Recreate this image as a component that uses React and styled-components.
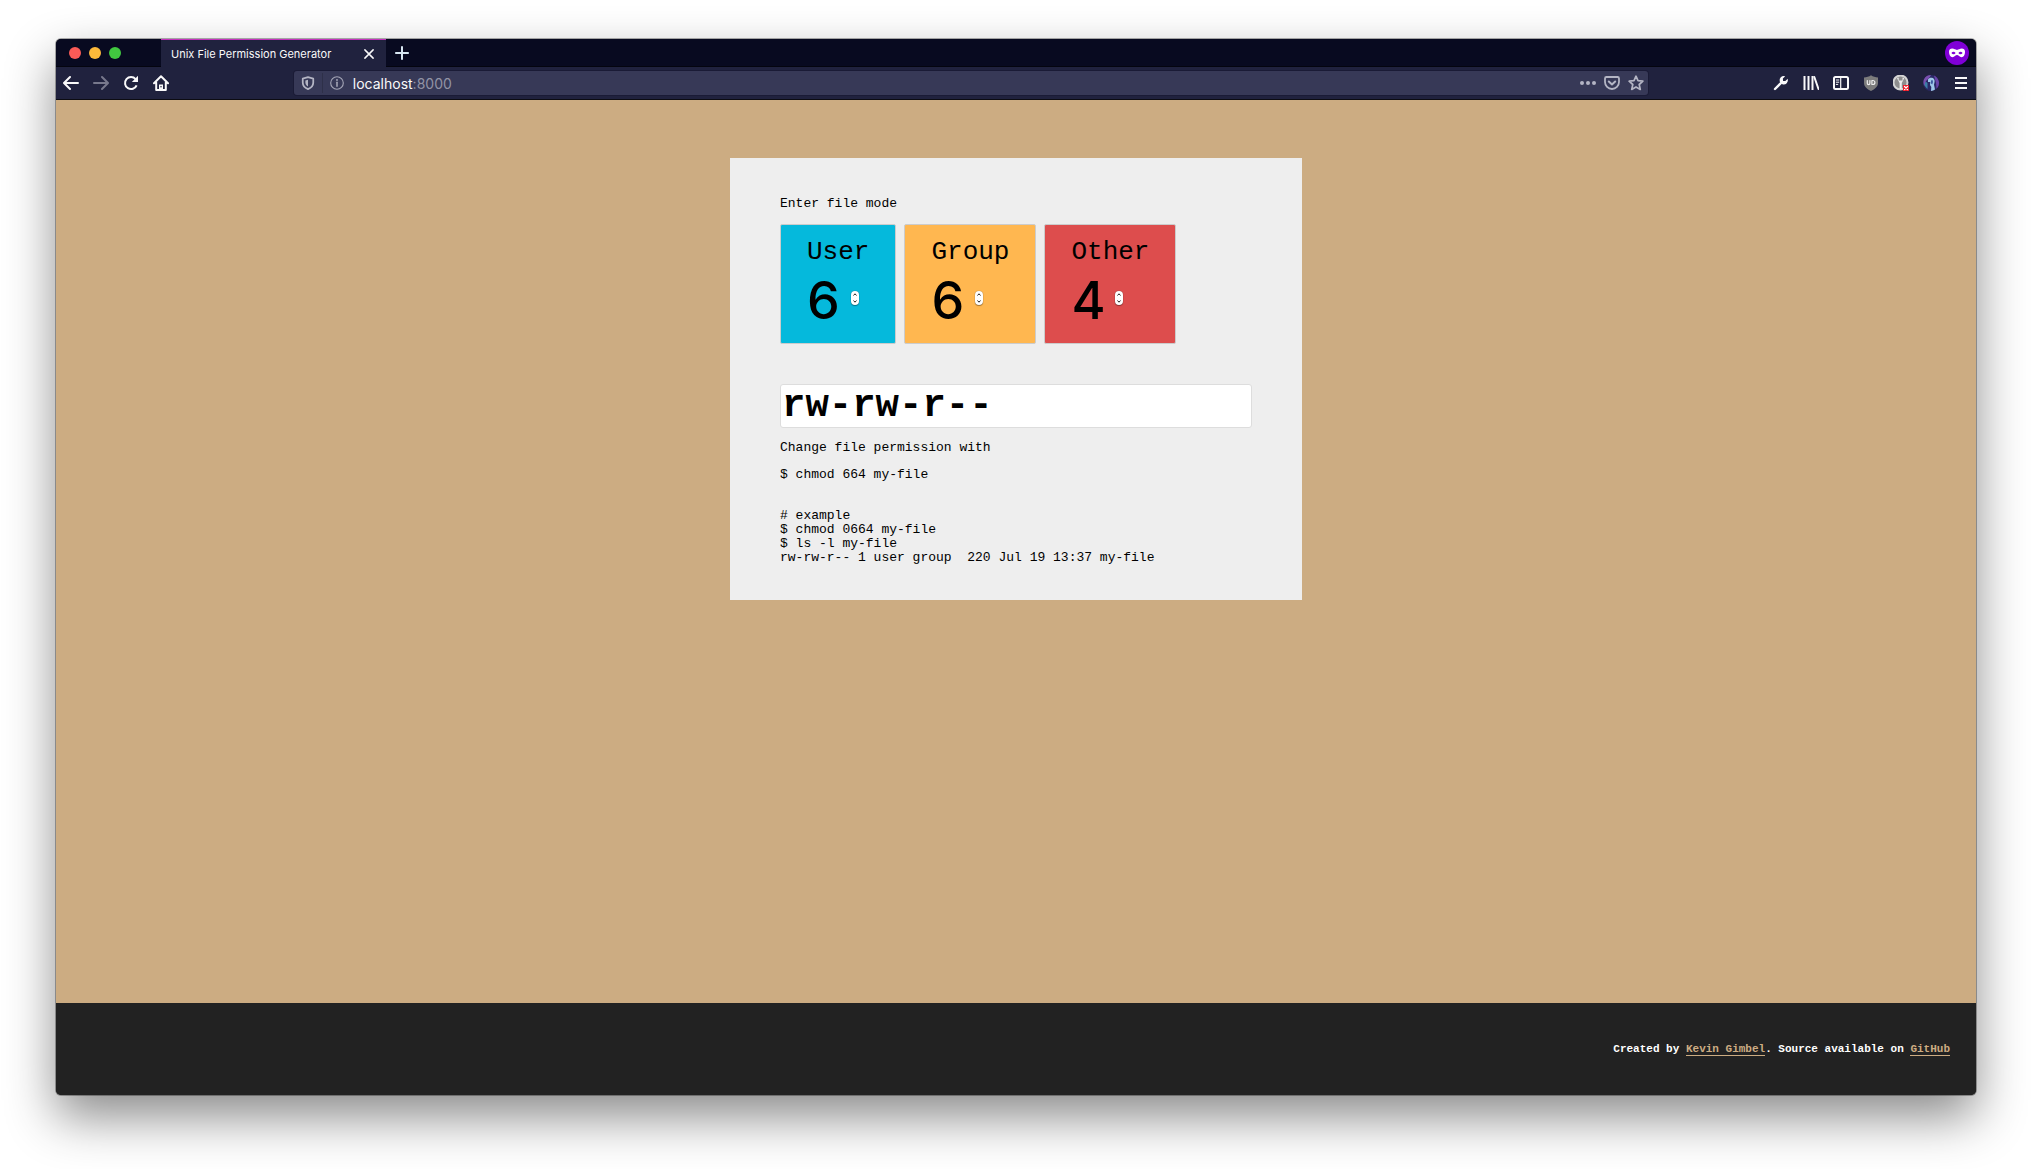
import React, { useState } from "react";
import styled, { createGlobalStyle } from "styled-components";

const mono = `"Liberation Mono", "Courier New", monospace`;
const ui = `Inter, "Liberation Sans", sans-serif`;

const GlobalStyle = createGlobalStyle`
  *, *::before, *::after { box-sizing: border-box; }
  body { margin: 0; background: #fff; }
  button, input { font: inherit; color: inherit; }
  button { border: 0; padding: 0; background: none; }
  svg { display: block; }
`;

const Desktop = styled.div`
  display: flex;
  min-height: 100vh;
  padding: 39px 56px 74px;
`;

const Window = styled.div`
  display: flex;
  flex: 1;
  flex-direction: column;
  min-width: 0;
  overflow: hidden;
  border-radius: 5px;
  background: #222;
  box-shadow: 0 0 0 1px rgba(0, 0, 0, 0.3), 0 22px 50px rgba(0, 0, 0, 0.46);
`;

const TabStrip = styled.header`
  display: flex;
  align-items: stretch;
  height: 28px;
  background: #080a20;
  font-family: ${ui};
`;

const TrafficLights = styled.div`
  display: flex;
  align-items: center;
  gap: 8px;
  width: 105px;
  padding-left: 13px;
  box-shadow: inset 0 -1px #04050f;
`;

const Light = styled.button`
  width: 12px;
  height: 12px;
  border-radius: 50%;
  background: ${(p) => p.$color};
`;

const Tab = styled.div`
  display: flex;
  align-items: center;
  justify-content: space-between;
  width: 225px;
  padding: 0 9px 0 10px;
  background: #20223e;
  border-top: 1px solid #c433bd;
  color: #f9f9fa;
  font-size: 11px;
  line-height: 14px;
`;

const IconButton = styled.button`
  display: flex;
  align-items: center;
  justify-content: center;
  width: ${(p) => p.$width || 30}px;
  height: ${(p) => p.$height || 32}px;
  color: ${(p) => p.$color || "#f9f9fa"};
`;

const StripRest = styled.div`
  display: flex;
  flex: 1;
  align-items: center;
  justify-content: space-between;
  padding: 0 7px 0 1px;
  box-shadow: inset 0 -1px #04050f;
`;

const PrivateBadge = styled.span`
  display: flex;
  align-items: center;
  justify-content: center;
  width: 24px;
  height: 24px;
  border-radius: 50%;
  background: #8000d7;
`;

const Toolbar = styled.nav`
  display: flex;
  align-items: center;
  height: 33px;
  border-bottom: 1px solid #0c0c12;
  background: #20223e;
  font-family: ${ui};
`;

const Spacer = styled.div`
  flex: 2 1 0;
`;

const AddressBar = styled.div`
  display: flex;
  flex: 23 1 0;
  align-items: center;
  height: 24px;
  min-width: 0;
  border-radius: 3px;
  background: #373957;
  box-shadow: 0 0 0 1px #1a1b36;
  color: #b4b5c4;
`;

const ShieldCell = styled.div`
  display: flex;
  border-right: 1px solid #2e3049;
`;

const Url = styled.div`
  flex: 1;
  padding: 2px 0 0 2px;
  font-size: 14px;
  line-height: 18px;
  color: #9293a5;

  b { color: #f9f9fa; font-weight: 400; }
`;

const Page = styled.main`
  display: flex;
  flex: 1;
  flex-direction: column;
  align-items: center;
  padding: 58px 16px;
  background: #ccac82;
`;

const Card = styled.section`
  width: 100%;
  max-width: 572px;
  padding: 39px 50px 35px;
  background: #eee;
  color: #000;
  font: 13px/14px ${mono};
`;

const Text = styled.p`
  margin: 0;
`;

const Modes = styled.div`
  display: flex;
  flex-wrap: wrap;
  gap: 8px;
  margin: 13px 0 40px;
`;

const ModeBox = styled.div`
  padding: 13px 26px;
  border: 1px solid #ccc;
  border-radius: 2px;
  background: ${(p) => p.$color};
`;

const ModeLabel = styled.label`
  display: block;
  font-size: 26px;
  line-height: 28px;
`;

const ModeField = styled.div`
  display: flex;
  align-items: center;
  gap: 8px;
`;

const ModeInput = styled.input`
  width: 36px;
  height: 64px;
  padding: 4px 0 0;
  border: 0;
  outline: 0;
  background: transparent;
  font: 500 52px/60px ${ui};
  appearance: textfield;

  &::-webkit-inner-spin-button,
  &::-webkit-outer-spin-button { appearance: none; margin: 0; }
`;

const Stepper = styled.div`
  display: flex;
  flex-direction: column;
  width: 8px;
  height: 14px;
  border-radius: 4px;
  background: #fff;
  box-shadow: 0 1px 1px rgba(0, 0, 0, 0.35), 0 0 1px rgba(0, 0, 0, 0.4);
`;

const Step = styled.button`
  display: flex;
  align-items: center;
  justify-content: center;
  width: 8px;
  height: 7px;
`;

const Output = styled.input`
  display: block;
  width: 100%;
  height: 44px;
  margin-bottom: 13px;
  padding: 1px;
  border: 1px solid #ddd;
  border-radius: 3px;
  outline: 0;
  background: #fff;
  font: bold 39px/42px ${mono};
`;

const Code = styled.pre`
  margin: ${(p) => p.$gap}px 0 0;
  font: inherit;
  white-space: pre-wrap;
`;

const Footer = styled.footer`
  padding: 39px 26px;
  background: #222;
  color: #fff;
  font: bold 11px/14px ${mono};
  text-align: right;

  a {
    color: #ccac82;
    text-decoration: none;
    border-bottom: 1px solid #ccac82;
  }
`;

const Svg = ({ size = 16, children, ...rest }) => (
  <svg width={size} height={size} viewBox="0 0 16 16" fill="none" stroke="currentColor"
    strokeWidth="2" strokeLinecap="round" strokeLinejoin="round" aria-hidden="true" {...rest}>
    {children}
  </svg>
);

const BackIcon = () => <Svg><path d="M15 8H1.5M7 2 1 8l6 6" /></Svg>;
const ForwardIcon = () => <Svg><path d="M1 8h13.5M9 2l6 6-6 6" /></Svg>;
const ReloadIcon = () => (
  <Svg strokeLinecap="butt"><path d="M12.6 4.2A6 6 0 1 0 13.6 10.3" /><path d="M15 .8V7H8.8Z" fill="currentColor" stroke="none" /></Svg>
);
const HomeIcon = () => (
  <Svg><path d="M1 8.3 8 1.2l7 7.1M3.2 7.5V15h9.6V7.5" /><path d="M6 9.5h4V15H6z" fill="currentColor" stroke="none" /><path d="M8 11.2v1" stroke="#20223e" strokeWidth="1.6" strokeLinecap="butt" /></Svg>
);
const CloseIcon = () => <Svg size={12}><path d="M2.5 2.5l11 11M13.5 2.5l-11 11" /></Svg>;
const PlusIcon = () => <Svg><path d="M8 1.2v13.6M1.2 8h13.6" strokeLinecap="butt" /></Svg>;
const MaskIcon = () => (
  <svg width="16" height="10" viewBox="0 0 16 10" aria-hidden="true">
    <path fill="#fff" fillRule="evenodd" d="M0 3.8C0 1.400 1.400.6 3.200.6 5.300.6 6.500 1.900 8 1.900S10.700.6 12.800.6c1.800 0 3.200.8 3.200 3.200 0 3-1.200 5.400-3.500 5.400-2 0-3-2.200-4.500-2.200S5.500 9.200 3.500 9.200C1.200 9.200 0 6.800 0 3.800ZM2.400 5c.6.9 1.300 1.300 2.100 1.300S6.100 5.900 6.600 5C6 4.100 5.300 3.700 4.500 3.700S3 4.100 2.400 5Zm7 0c.5.9 1.300 1.300 2.100 1.300s1.500-.4 2.100-1.300c-.6-.9-1.300-1.300-2.100-1.300S10 4.100 9.400 5Z" />
  </svg>
);
const ShieldIcon = () => (
  <Svg size={14}><path d="M8 1.300 14 3v4.500c0 3.700-2.300 6.100-6 7.500-3.700-1.400-6-3.800-6-7.500V3Z" /><path d="M8 4.300V12c-2-1-3-2.500-3-4.500V5Z" fill="currentColor" stroke="none" /></Svg>
);
const InfoIcon = () => (
  <Svg size={14} strokeWidth="1.300"><circle cx="8" cy="8" r="7.200" /><path d="M8 7.200v4.500" strokeWidth="1.800" /><circle cx="8" cy="4.500" r="1.100" fill="currentColor" stroke="none" /></Svg>
);
const DotsIcon = () => (
  <Svg fill="currentColor" stroke="none"><circle cx="2" cy="8" r="2" /><circle cx="8" cy="8" r="2" /><circle cx="14" cy="8" r="2" /></Svg>
);
const PocketIcon = () => (
  <Svg><path d="M2.500 2h11a1.500 1.500 0 0 1 1.500 1.500V7a7 7 0 0 1-14 0V3.500A1.500 1.500 0 0 1 2.500 2Z" strokeWidth="1.800" /><path d="M4.800 6.500 8 9.500l3.200-3" /></Svg>
);
const StarIcon = () => (
  <Svg strokeWidth="1.700"><path d="m8 1.200 2 4.500 4.900.5-3.700 3.300 1.100 4.900L8 11.900l-4.300 2.500 1.100-4.900L1.100 6.200 6 5.700Z" /></Svg>
);
const WrenchIcon = () => (
  <Svg><path d="m2 14 6.500-6.500" strokeWidth="2.400" /><path d="M14.700 3.800 12.300 6 10 5.900 9.900 3.600 12.200 1.200A4.300 4.300 0 0 0 6.700 6.600l2.700 2.700a4.300 4.300 0 0 0 5.300-5.500Z" fill="currentColor" stroke="none" /></Svg>
);
const LibraryIcon = () => <Svg><path d="M1.500 2v12M5.500 2v12M9.500 2v12" strokeLinecap="square" /><path d="M11.300 2 15.500 14" /></Svg>;
const SidebarIcon = () => (
  <Svg><rect x="1" y="2" width="14" height="12" rx="1.500" /><path d="M7.700 2v12" strokeWidth="1.200" /><path d="M3.300 5h2.500M3.300 7.200h2.500M3.300 9.400h1.500" strokeWidth="1" /></Svg>
);
const BlockerIcon = () => (
  <Svg stroke="none"><path d="M8 .3c2 1.500 4.500 2 7 2.200V8c0 3.600-3 6-7 8-4-2-7-4.400-7-8V2.500C3.500 2.300 6 1.800 8 .3Z" fill="#7c7c7c" /><path d="M4.300 5.500v2.800a1.300 1.300 0 0 0 2.600 0V5.500M8.900 5.500v4h1a2 2 0 0 0 0-4Z" fill="none" stroke="#eee" strokeWidth="1.200" /></Svg>
);
const KeyIcon = () => (
  <Svg stroke="none"><circle cx="7.500" cy="7.500" r="7" fill="#8d8d8d" stroke="#d5d5d5" /><path d="M4 3.200 6.600 8v6h2.200V8l2.400-4.800-1.700-.7v3H5.700v-3Z" fill="#eee" /><path d="M10 10h6v6h-6z" fill="#f01c28" /><path d="m11.500 11.500 3 3m0-3-3 3" stroke="#fff" strokeWidth="1.200" /></Svg>
);
const AvatarIcon = () => (
  <Svg stroke="none"><circle cx="8" cy="8" r="8" fill="#2b2a66" /><path d="M1 4.200A8 8 0 0 1 8 0L6.500 2.500 3 6l-1.500 5A8 8 0 0 1 1 4.200Z" fill="#7a4fae" /><path d="M11 .6a8 8 0 0 1 2.500 13.200L13 8Z" fill="#6a45a8" /><path d="M5 4.500C6 2.800 7.500 2.500 9 2.800c2 .4 2.800 2 2.600 4l-.6 3 1 4.800A8 8 0 0 1 8 16l.3-4L7 10l.3-3L5 7Z" fill="#9fc9e8" /><path d="m8 5.500 1.500-.5.500 2-.8 2.500L8 8.500Z" fill="#3d5ba0" /><path d="M2.500 6.500 4.500 8v6a8 8 0 0 1-3-4Z" fill="#3c7fa8" /></Svg>
);
const MenuIcon = () => <Svg><path d="M2 3h12M2 8h12M2 13h12" strokeLinecap="butt" /></Svg>;

const LIGHTS = [["Close window", "#fc5b57"], ["Minimize window", "#fdb93a"], ["Zoom window", "#41c840"]];
const NAVIGATION = [["Back", BackIcon], ["Forward", ForwardIcon, "#77788c"], ["Reload", ReloadIcon], ["Home", HomeIcon]];
const URL_ACTIONS = [["Page actions", DotsIcon], ["Save to Pocket", PocketIcon], ["Bookmark", StarIcon]];
const TOOLS = [
  ["Developer tools", WrenchIcon], ["Library", LibraryIcon], ["Sidebars", SidebarIcon], ["Content blocker", BlockerIcon],
  ["Passwords", KeyIcon], ["Account", AvatarIcon], ["Menu", MenuIcon],
];
const MODES = [
  { id: "user", label: "User", color: "#05b9dc" },
  { id: "group", label: "Group", color: "#ffb750" },
  { id: "other", label: "Other", color: "#dd4d4d" },
];

const symbolic = (n) => (n & 4 ? "r" : "-") + (n & 2 ? "w" : "-") + (n & 1 ? "x" : "-");
const clamp = (n) => Math.max(0, Math.min(7, Number(n) || 0));

export default function App() {
  const [mode, setMode] = useState({ user: 6, group: 6, other: 4 });
  const set = (id, value) => setMode((m) => ({ ...m, [id]: clamp(value) }));
  const octal = `${mode.user}${mode.group}${mode.other}`;
  const permission = MODES.map(({ id }) => symbolic(mode[id])).join("");

  return (
    <Desktop>
      <GlobalStyle />
      <Window>
        <TabStrip>
          <TrafficLights>
            {LIGHTS.map(([name, color]) => <Light key={name} aria-label={name} $color={color} />)}
          </TrafficLights>
          <Tab>
            <span>Unix File Permission Generator</span>
            <IconButton aria-label="Close tab" $width={16} $height={16}><CloseIcon /></IconButton>
          </Tab>
          <StripRest>
            <IconButton aria-label="New tab" $height={26} $color="#d7e6f2"><PlusIcon /></IconButton>
            <PrivateBadge><MaskIcon /></PrivateBadge>
          </StripRest>
        </TabStrip>
        <Toolbar>
          {NAVIGATION.map(([name, Icon, color]) => (
            <IconButton key={name} aria-label={name} $color={color}><Icon /></IconButton>
          ))}
          <Spacer />
          <AddressBar>
            <ShieldCell>
              <IconButton aria-label="Tracking protection" $width={28} $height={20} $color="#b4b5c4"><ShieldIcon /></IconButton>
            </ShieldCell>
            <IconButton aria-label="Site information" $width={28} $height={20} $color="#a4a5b6"><InfoIcon /></IconButton>
            <Url><b>localhost</b>:8000</Url>
            {URL_ACTIONS.map(([name, Icon]) => (
              <IconButton key={name} aria-label={name} $width={24} $height={24} $color="#b4b5c4"><Icon /></IconButton>
            ))}
          </AddressBar>
          <Spacer />
          {TOOLS.map(([name, Icon]) => <IconButton key={name} aria-label={name}><Icon /></IconButton>)}
        </Toolbar>
        <Page>
          <Card>
            <Text>Enter file mode</Text>
            <Modes>
              {MODES.map(({ id, label, color }) => (
                <ModeBox key={id} $color={color}>
                  <ModeLabel htmlFor={id}>{label}</ModeLabel>
                  <ModeField>
                    <ModeInput id={id} type="number" min="0" max="7" value={mode[id]} onChange={(e) => set(id, e.target.value)} />
                    <Stepper>
                      <Step aria-label={`Increase ${label}`} onClick={() => set(id, mode[id] + 1)}>
                        <svg width="4" height="3" viewBox="0 0 4 3" fill="none" stroke="#222"><path d="M.5 2.500 2 .8l1.500 1.700" /></svg>
                      </Step>
                      <Step aria-label={`Decrease ${label}`} onClick={() => set(id, mode[id] - 1)}>
                        <svg width="4" height="3" viewBox="0 0 4 3" fill="none" stroke="#222"><path d="M.5.5 2 2.200 3.500.5" /></svg>
                      </Step>
                    </Stepper>
                  </ModeField>
                </ModeBox>
              ))}
            </Modes>
            <Output aria-label="Permissions" readOnly value={permission} />
            <Text>Change file permission with</Text>
            <Code $gap={13}>{`$ chmod ${octal} my-file`}</Code>
            <Code $gap={27}>{`# example
$ chmod 0${octal} my-file
$ ls -l my-file
${permission} 1 user group  220 Jul 19 13:37 my-file`}</Code>
          </Card>
        </Page>
        <Footer>
          Created by <a href="#kevin-gimbel">Kevin Gimbel</a>. Source available on <a href="#github">GitHub</a>
        </Footer>
      </Window>
    </Desktop>
  );
}
